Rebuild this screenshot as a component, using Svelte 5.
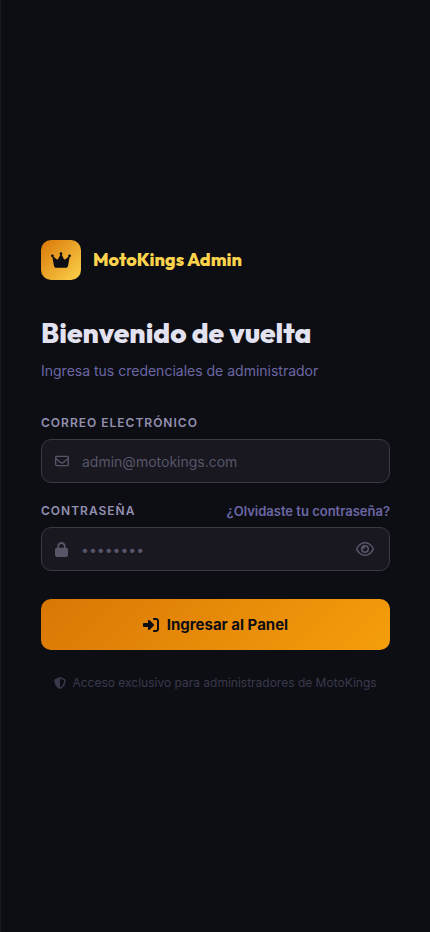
<script lang="ts">
	let email = $state('');
	let password = $state('');
	let showPassword = $state(false);

	const submit = (e: SubmitEvent) => {
		e.preventDefault();
	};
</script>

<main class="panel">
	<div class="content">
		<div class="brand">
			<span class="brand-icon">
				<svg viewBox="0 0 576 512" width="20" height="18" aria-hidden="true">
					<path
						d="M309 106c11.4-7 19-19.7 19-34c0-22.1-17.9-40-40-40s-40 17.9-40 40c0 14.4 7.6 27 19 34L209.7 220.6c-9.1 18.2-32.7 23.4-48.6 10.7L72 160c5-6.7 8-15 8-24c0-22.1-17.9-40-40-40S0 113.9 0 136s17.9 40 40 40c.2 0 .5 0 .7 0L86.4 427.4c5.5 30.4 32 52.6 63 52.6H426.6c30.9 0 57.4-22.1 63-52.6L535.3 176c.2 0 .5 0 .7 0c22.1 0 40-17.9 40-40s-17.9-40-40-40s-40 17.9-40 40c0 9 3 17.3 8 24l-89.1 71.3c-15.9 12.7-39.5 7.5-48.6-10.7L309 106z"
					/>
				</svg>
			</span>
			<span class="brand-name">MotoKings Admin</span>
		</div>

		<h1>Bienvenido de vuelta</h1>
		<p class="subtitle">Ingresa tus credenciales de administrador</p>

		<form onsubmit={submit}>
			<div class="field">
				<div class="field-head">
					<label for="email">Correo electrónico</label>
				</div>
				<div class="input-wrap">
					<svg viewBox="0 0 512 512" width="14" height="14" aria-hidden="true">
						<path
							d="M64 112c-8.8 0-16 7.2-16 16v22.1L220.5 291.7c20.7 17 50.4 17 71.1 0L464 150.1V128c0-8.8-7.2-16-16-16H64zM48 212.2V384c0 8.8 7.2 16 16 16H448c8.8 0 16-7.2 16-16V212.2L322 328.8c-38.4 31.5-93.7 31.5-132 0L48 212.2zM0 128C0 92.7 28.7 64 64 64H448c35.3 0 64 28.7 64 64V384c0 35.3-28.7 64-64 64H64c-35.3 0-64-28.7-64-64V128z"
						/>
					</svg>
					<input id="email" type="email" placeholder="admin@motokings.com" bind:value={email} />
				</div>
			</div>

			<div class="field">
				<div class="field-head">
					<label for="password">Contraseña</label>
					<a href="#recuperar">¿Olvidaste tu contraseña?</a>
				</div>
				<div class="input-wrap">
					<svg viewBox="0 0 448 512" width="13" height="15" aria-hidden="true">
						<path
							d="M144 144v48H304V144c0-44.2-35.8-80-80-80s-80 35.8-80 80zM80 192V144C80 64.5 144.5 0 224 0s144 64.5 144 144v48h16c35.3 0 64 28.7 64 64V448c0 35.3-28.7 64-64 64H64c-35.3 0-64-28.7-64-64V256c0-35.3 28.7-64 64-64H80z"
						/>
					</svg>
					<input
						id="password"
						type={showPassword ? 'text' : 'password'}
						placeholder="••••••••"
						bind:value={password}
					/>
					<button
						type="button"
						class="toggle"
						aria-label="Mostrar contraseña"
						onclick={() => (showPassword = !showPassword)}
					>
						<svg viewBox="0 0 576 512" width="18" height="16" aria-hidden="true">
							<path
								d="M288 80c-65.2 0-118.8 29.6-159.9 67.7C89.6 183.5 63 226 49.4 256c13.6 30 40.2 72.5 78.6 108.3C169.2 402.4 222.8 432 288 432s118.8-29.6 159.9-67.7C486.4 328.5 513 286 526.6 256c-13.6-30-40.2-72.5-78.6-108.3C406.8 109.6 353.2 80 288 80zM95.4 112.6C142.5 68.8 207.2 32 288 32s145.5 36.8 192.6 80.6c46.8 43.5 78.1 95.4 93 131.1c3.3 7.9 3.3 16.7 0 24.6c-14.9 35.7-46.2 87.7-93 131.1C433.5 443.2 368.8 480 288 480s-145.5-36.8-192.6-80.6C48.6 356 17.3 304 2.5 268.3c-3.3-7.9-3.3-16.7 0-24.6C17.3 208 48.6 156 95.4 112.6zM288 336c44.2 0 80-35.8 80-80s-35.8-80-80-80c-.7 0-1.3 0-2 0c1.3 5.1 2 10.5 2 16c0 35.3-28.7 64-64 64c-5.5 0-10.9-.7-16-2c0 .7 0 1.3 0 2c0 44.2 35.8 80 80 80zm0-208a128 128 0 1 1 0 256 128 128 0 1 1 0-256z"
							/>
						</svg>
					</button>
				</div>
			</div>

			<button type="submit" class="submit">
				<svg viewBox="0 0 512 512" width="16" height="16" aria-hidden="true">
					<path
						d="M217.9 105.9L340.7 228.7c7.2 7.2 11.3 17.1 11.3 27.3s-4.1 20.1-11.3 27.3L217.9 406.1c-6.4 6.4-15 9.9-24 9.9c-18.7 0-33.9-15.2-33.9-33.9l0-62.1L32 320c-17.7 0-32-14.3-32-32l0-64c0-17.7 14.3-32 32-32l128 0 0-62.1c0-18.7 15.2-33.9 33.9-33.9c9 0 17.6 3.6 24 9.9zM352 416l64 0c17.7 0 32-14.3 32-32l0-256c0-17.7-14.3-32-32-32l-64 0c-17.7 0-32-14.3-32-32s14.3-32 32-32l64 0c53 0 96 43 96 96l0 256c0 53-43 96-96 96l-64 0c-17.7 0-32-14.3-32-32s14.3-32 32-32z"
					/>
				</svg>
				Ingresar al Panel
			</button>
		</form>

		<p class="notice">
			<svg viewBox="0 0 512 512" width="12" height="12" aria-hidden="true">
				<path
					d="M256 0c4.6 0 9.2 1 13.4 2.9L457.7 82.8c22 9.3 38.4 31 38.3 57.2c-.5 99.2-41.3 280.7-213.6 363.2c-16.7 8-36.1 8-52.8 0C57.3 420.7 16.5 239.2 16 140c-.1-26.2 16.3-47.9 38.3-57.2L242.7 2.9C246.8 1 251.4 0 256 0zm0 66.8V444.8C394 378 431.1 230.1 432 141.4L256 66.8z"
				/>
			</svg>
			Acceso exclusivo para administradores de MotoKings
		</p>
	</div>
</main>

<style>
	:global(body) {
		margin: 0;
		background: #0d0e14;
	}

	.panel {
		box-sizing: border-box;
		min-height: 100vh;
		padding: 40px;
		border-left: 1px solid #1a1b20;

		display: flex;
		flex-direction: column;
		justify-content: center;

		color: #e2e2f0;
		font-family: Inter, 'Liberation Sans', sans-serif;
	}

	svg {
		flex-shrink: 0;
		fill: currentColor;
	}

	.content {
		width: 100%;
		max-width: 400px;
		margin: 0 auto;
	}

	.brand {
		display: flex;
		align-items: center;
		gap: 12px;
		margin-bottom: 36px;
	}

	.brand-icon {
		width: 40px;
		height: 40px;
		border-radius: 10px;
		background: linear-gradient(135deg, #d97706, #fcd34d);
		color: #0d0e14;

		display: flex;
		align-items: center;
		justify-content: center;
	}

	.brand-name {
		color: #fcd34d;
		font-family: Outfit, Inter, sans-serif;
		font-size: 18px;
		font-weight: 800;
		line-height: 22px;
	}

	h1 {
		margin: 0 0 10px;
		font-family: Outfit, Inter, sans-serif;
		font-size: 28px;
		font-weight: 800;
		line-height: 34px;
	}

	.subtitle {
		margin: 0 0 33px;
		color: #6b66a3;
		font-size: 14px;
		line-height: 22px;
	}

	.field {
		margin-bottom: 20px;
	}

	.field-head {
		display: flex;
		align-items: center;
		justify-content: space-between;
		margin-bottom: 8px;
		line-height: 16px;
	}

	label {
		color: #9490b0;
		font-size: 12px;
		font-weight: 600;
		letter-spacing: 1px;
		text-transform: uppercase;
	}

	a {
		color: #6b66a3;
		font-size: 13px;
		font-weight: 600;
		text-decoration: none;
	}

	.input-wrap {
		display: flex;
		align-items: center;
		padding: 0 13px;
		border: 1px solid #3a3944;
		border-radius: 10px;
		background: #191820;
		color: #575568;
	}

	.input-wrap:focus-within {
		border-color: #f59e0b;
	}

	input {
		flex: 1;
		min-width: 0;
		height: 42px;
		padding: 0 13px;
		border: none;
		outline: none;
		background: none;
		color: #e2e2f0;
		font-family: inherit;
		font-size: 14px;
	}

	input::placeholder {
		color: #575568;
		opacity: 1;
	}

	.toggle {
		display: flex;
		padding: 2px;
		border: none;
		background: none;
		color: inherit;
		cursor: pointer;
	}

	.submit {
		width: 100%;
		height: 51px;
		margin-top: 28px;
		border: none;
		border-radius: 10px;
		background: linear-gradient(135deg, #d97706, #f59e0b);
		color: #0d0e14;
		cursor: pointer;

		display: flex;
		align-items: center;
		justify-content: center;
		gap: 8px;

		font-family: inherit;
		font-size: 15px;
		font-weight: 700;
	}

	.notice {
		display: flex;
		align-items: center;
		justify-content: center;
		gap: 6px;
		margin: 24px 0 0;
		color: #3a394b;
		font-size: 12px;
		line-height: 18px;
	}
</style>
